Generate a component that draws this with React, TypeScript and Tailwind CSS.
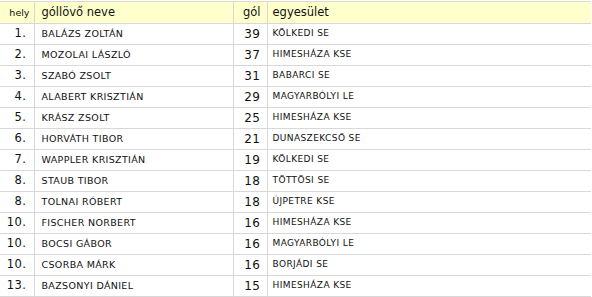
import React from 'react';

const rows = [
  { place: '1.', name: 'BALÁZS ZOLTÁN', goals: 39, club: 'KÖLKEDI SE' },
  { place: '2.', name: 'MOZOLAI LÁSZLÓ', goals: 37, club: 'HIMESHÁZA KSE' },
  { place: '3.', name: 'SZABÓ ZSOLT', goals: 31, club: 'BABARCI SE' },
  { place: '4.', name: 'ALABERT KRISZTIÁN', goals: 29, club: 'MAGYARBÓLYI LE' },
  { place: '5.', name: 'KRÁSZ ZSOLT', goals: 25, club: 'HIMESHÁZA KSE' },
  { place: '6.', name: 'HORVÁTH TIBOR', goals: 21, club: 'DUNASZEKCSŐ SE' },
  { place: '7.', name: 'WAPPLER KRISZTIÁN', goals: 19, club: 'KÖLKEDI SE' },
  { place: '8.', name: 'STAUB TIBOR', goals: 18, club: 'TÖTTÖSI SE' },
  { place: '8.', name: 'TOLNAI RÓBERT', goals: 18, club: 'ÚJPETRE KSE' },
  { place: '10.', name: 'FISCHER NORBERT', goals: 16, club: 'HIMESHÁZA KSE' },
  { place: '10.', name: 'BOCSI GÁBOR', goals: 16, club: 'MAGYARBÓLYI LE' },
  { place: '10.', name: 'CSORBA MÁRK', goals: 16, club: 'BORJÁDI SE' },
  { place: '13.', name: 'BAZSONYI DÁNIEL', goals: 15, club: 'HIMESHÁZA KSE' },
];

export default function App() {
  return (
    <div className="w-[592px] h-[297px] bg-white overflow-hidden pt-[1px] font-['DejaVu_Sans',sans-serif] text-[#111]">
      <table className="w-[591px] border-collapse border-t border-[#d8d8d8] table-fixed">
        <colgroup>
          <col className="w-[34px]" />
          <col className="w-[199px]" />
          <col className="w-[34px]" />
          <col />
        </colgroup>
        <thead>
          <tr className="bg-[#ffffcc] h-[22px] border-b border-[#d8d8d8]">
            <th className="text-right pr-[4px] pt-[1px] text-[9.5px] font-normal border-r border-[#d8d8d8]">hely</th>
            <th className="text-left pl-[7px] pt-[1px] text-[11.5px] font-normal border-r border-[#d8d8d8]">góllövő neve</th>
            <th className="text-right pr-[6px] pt-[1px] text-[11.5px] font-normal border-r border-[#d8d8d8]">gól</th>
            <th className="text-left pl-[5px] pt-[1px] text-[11.5px] font-normal">egyesület</th>
          </tr>
        </thead>
        <tbody>
          {rows.map((r, i) => (
            <tr key={i} className="h-[21px] border-b border-[#d8d8d8]">
              <td className="text-right pr-[7px] text-[11.5px] tracking-[0.5px] border-r border-[#d8d8d8]">{r.place}</td>
              <td className="pl-[7px] text-[9.5px] tracking-[0.35px] border-r border-[#d8d8d8]">{r.name}</td>
              <td className="text-right pr-[6px] text-[12px] tracking-[0.5px] border-r border-[#d8d8d8]">{r.goals}</td>
              <td className="pl-[5px] text-[9px] tracking-[0.4px]">{r.club}</td>
            </tr>
          ))}
        </tbody>
      </table>
    </div>
  );
}
